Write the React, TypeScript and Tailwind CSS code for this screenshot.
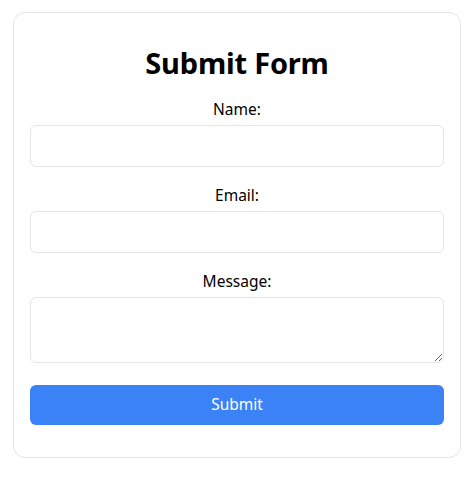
import { useState } from "react"

export default function App(): JSX.Element {
     const [name, setName] = useState("")
     const [email, setEmail] = useState("")
     const [message, setMessage] = useState("")

     const inputCls =
          "block w-full h-[42px] rounded-md border border-[#e5e5e5] bg-white px-3 text-base outline-none"

     return (
          <div
               className="min-h-[478px] bg-white pt-3"
               style={{ fontFamily: '"Noto Sans", "Open Sans", sans-serif' }}
          >
               <div className="mx-auto w-[448px] translate-x-[1px] rounded-xl border border-[#e5e5e5] bg-white px-4 py-8 text-black">
                    <h1 className="mb-4 text-center text-[29px] font-bold leading-9 tracking-[-0.2px]">
                         Submit Form
                    </h1>
                    <form onSubmit={(e) => e.preventDefault()}>
                         <div className="mb-4">
                              <label className="mb-1 block text-center text-[15.5px] leading-6">
                                   Name:
                              </label>
                              <input
                                   className={inputCls}
                                   value={name}
                                   onChange={(e) => setName(e.target.value)}
                              />
                         </div>
                         <div className="mb-4">
                              <label className="mb-1 block text-center text-[15.5px] leading-6">
                                   Email:
                              </label>
                              <input
                                   type="email"
                                   className={inputCls}
                                   value={email}
                                   onChange={(e) => setEmail(e.target.value)}
                              />
                         </div>
                         <div className="mb-[22px]">
                              <label className="mb-1 block text-center text-[15.5px] leading-6">
                                   Message:
                              </label>
                              <textarea
                                   className="block h-[66px] w-full rounded-md border border-[#e5e5e5] bg-white px-3 py-2 text-base outline-none"
                                   value={message}
                                   onChange={(e) => setMessage(e.target.value)}
                              />
                         </div>
                         <button
                              type="submit"
                              className="block h-10 w-full rounded-md bg-[#3b82f6] text-[15.5px] text-white"
                         >
                              Submit
                         </button>
                    </form>
               </div>
          </div>
     )
}
